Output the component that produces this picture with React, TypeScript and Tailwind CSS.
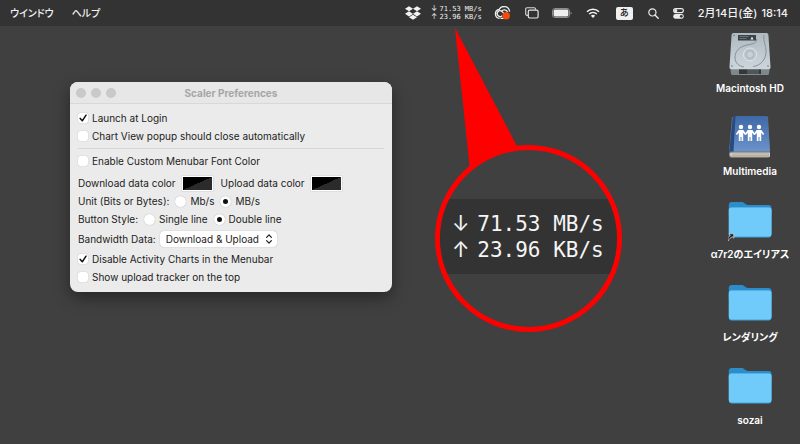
import { useState } from 'react';
import type { ReactNode } from 'react';
import { FaDropbox } from 'react-icons/fa';

interface CheckRowProps {
    id: string;
    label: string;
    defaultChecked?: boolean;
}

const CheckRow = ({ id, label, defaultChecked = false }: CheckRowProps) => (
    <div className="flex items-center gap-1 h-[18px]">
        <span className="relative flex">
            <input
                id={id}
                type="checkbox"
                defaultChecked={defaultChecked}
                className="peer appearance-none w-[10px] h-[10px] rounded-xs bg-white shadow-[0_0_1px_rgba(0,0,0,0.35)]"
            />
            <svg viewBox="0 0 10 10" className="absolute inset-0 w-[10px] h-[10px] hidden peer-checked:block pointer-events-none">
                <path d="M2.2 5.4 4.3 7.8 8 2.2" fill="none" stroke="#111" strokeWidth="1.5" strokeLinecap="round" strokeLinejoin="round" />
            </svg>
        </span>
        <label htmlFor={id}>{label}</label>
    </div>
);

interface RadioRowProps {
    name: string;
    label: string;
    options: string[];
    initial: string;
}

const RadioRow = ({ name, label, options, initial }: RadioRowProps) => {
    const [value, setValue] = useState(initial);

    return (
        <div role="radiogroup" aria-label={label} className="flex items-center gap-[6px] h-[18px]">
            <span>{label}</span>
            {options.map((option) => (
                <label key={option} className="flex items-center gap-1">
                    <input
                        type="radio"
                        name={name}
                        checked={value === option}
                        onChange={() => setValue(option)}
                        className="appearance-none w-[11px] h-[11px] rounded-full bg-white checked:bg-[#111] checked:border-3 border-white shadow-[0_0_1px_rgba(0,0,0,0.35)]"
                    />
                    {option}
                </label>
            ))}
        </div>
    );
};

const ColorWell = ({ id, label }: { id: string; label: string }) => (
    <div className="flex items-center gap-[6px]">
        <label htmlFor={id}>{label}</label>
        <input
            id={id}
            type="color"
            defaultValue="#000000"
            className="appearance-none w-[31px] h-[15px] p-0 border border-white bg-[linear-gradient(to_bottom_right,#000_50%,#2b2b2b_50%)] shadow-[0_0_1px_rgba(0,0,0,0.3)] [&::-webkit-color-swatch]:opacity-0"
        />
    </div>
);

const PreferencesWindow = () => (
    <section className="absolute left-[70px] top-14 w-[322px] rounded-lg bg-[#ebebeb] text-[#222] text-[10px] leading-4 overflow-hidden shadow-[0_6px_16px_rgba(0,0,0,0.4)]">
        <header className="relative flex items-center justify-center h-[22px] border-b border-[#d8d8d8] bg-[#e7e7e7]">
            <div className="absolute left-[6px] flex gap-[5px]">
                <button aria-label="Close" className="w-[10px] h-[10px] rounded-full bg-[#c9c9c9]" />
                <button aria-label="Minimize" className="w-[10px] h-[10px] rounded-full bg-[#c9c9c9]" />
                <button aria-label="Zoom" className="w-[10px] h-[10px] rounded-full bg-[#c9c9c9]" />
            </div>
            <h1 className="font-bold text-[#a6a6a6]">Scaler Preferences</h1>
        </header>
        <form className="px-2 pt-[5px] pb-[6px]">
            <CheckRow id="launch" label="Launch at Login" defaultChecked />
            <CheckRow id="autoclose" label="Chart View popup should close automatically" />
            <hr className="my-[3px] border-[#d6d6d6]" />
            <CheckRow id="custom-color" label="Enable Custom Menubar Font Color" />
            <div className="flex items-center gap-2 h-[18px] mt-1">
                <ColorWell id="download-color" label="Download data color" />
                <ColorWell id="upload-color" label="Upload data color" />
            </div>
            <RadioRow name="unit" label="Unit (Bits or Bytes):" options={['Mb/s', 'MB/s']} initial="MB/s" />
            <RadioRow name="style" label="Button Style:" options={['Single line', 'Double line']} initial="Double line" />
            <div className="flex items-center gap-1 h-[22px]">
                <label htmlFor="bandwidth">Bandwidth Data:</label>
                <span className="relative flex">
                    <select id="bandwidth" className="appearance-none w-[117px] h-4 pl-[6px] rounded-sm bg-white shadow-[0_0_1px_rgba(0,0,0,0.4)]">
                        <option>Download &amp; Upload</option>
                        <option>Download</option>
                        <option>Upload</option>
                    </select>
                    <svg viewBox="0 0 8 12" className="absolute right-1 top-[2px] w-2 h-3 pointer-events-none">
                        <path d="M1.6 4.4 4 1.8l2.4 2.6M1.6 7.6 4 10.2l2.4-2.6" fill="none" stroke="#222" strokeWidth="1.2" strokeLinecap="round" strokeLinejoin="round" />
                    </svg>
                </span>
            </div>
            <CheckRow id="charts" label="Disable Activity Charts in the Menubar" defaultChecked />
            <CheckRow id="tracker" label="Show upload tracker on the top" />
        </form>
    </section>
);

const CloudIcon = () => (
    <svg viewBox="0 0 18 14" className="w-[18px] h-[14px]">
        <g fill="none" stroke="#f0f0f0" strokeWidth="1.3">
            <path d="M5.6 12.4a4.6 4.6 0 0 1-.4-9.1A5.6 5.6 0 0 1 15.6 5.6" />
            <path d="M8.2 9.6A2.9 2.9 0 1 1 7.9 5.4L11 8.6" />
            <path d="M6.6 12.4h3.2M7.6 5.2A3.4 3.4 0 0 1 13.5 6" />
        </g>
        <circle cx="12.2" cy="9.8" r="3.8" fill="#f04a0c" />
    </svg>
);

const WindowsIcon = () => (
    <svg viewBox="0 0 14 12" className="w-[14px] h-3">
        <path d="M3 8.4H2A1.3 1.3 0 0 1 .7 7V2A1.3 1.3 0 0 1 2 .7h7.2A1.3 1.3 0 0 1 10.5 2v.8" fill="none" stroke="#d8d8d8" strokeWidth="1.1" />
        <rect x="3.3" y="3.2" width="9.8" height="7.8" rx="1.4" fill="none" stroke="#e6e6e6" strokeWidth="1.2" />
    </svg>
);

const BatteryIcon = () => (
    <svg viewBox="0 0 20 10" className="w-5 h-[10px]">
        <rect x="0.5" y="0.5" width="17" height="9" rx="2.4" fill="none" stroke="#8c8c8c" />
        <rect x="1.6" y="1.6" width="14.8" height="6.8" rx="1.4" fill="#f0f0f0" />
        <path d="M18.6 3.4v3.2c.7-.3 1.1-.9 1.1-1.6s-.4-1.3-1.1-1.6z" fill="#8c8c8c" />
    </svg>
);

const WifiIcon = () => (
    <svg viewBox="0 0 14 10" className="w-[14px] h-[10px]">
        <path d="M1 3.7a8.6 8.6 0 0 1 12 0M3.2 6a5.5 5.5 0 0 1 7.6 0" fill="none" stroke="#f2f2f2" strokeWidth="1.6" />
        <path d="M7 9.9 4.9 7.8a3 3 0 0 1 4.2 0z" fill="#f2f2f2" />
    </svg>
);

const SearchIcon = () => (
    <svg viewBox="0 0 11 11" className="w-[11px] h-[11px]">
        <circle cx="4.4" cy="4.4" r="3.6" fill="none" stroke="#ececec" strokeWidth="1.2" />
        <path d="m7 7 3.2 3.2" stroke="#ececec" strokeWidth="1.4" strokeLinecap="round" />
    </svg>
);

const ControlCenterIcon = () => (
    <svg viewBox="0 0 11 11" className="w-[11px] h-[11px]">
        <rect x="0.6" y="0.6" width="9.8" height="4" rx="2" fill="none" stroke="#ececec" strokeWidth="1.1" />
        <circle cx="2.7" cy="2.6" r="1.6" fill="#ececec" />
        <rect x="0.2" y="5.9" width="10.6" height="4.9" rx="2.4" fill="#ececec" />
        <circle cx="8.3" cy="8.35" r="1.4" fill="#333" />
    </svg>
);

const SpeedLine = ({ arrow, value }: { arrow: string; value: string }) => (
    <div className="flex">
        <span className="w-[2ch]"><span className="font-[Inter,sans-serif]">{arrow}</span></span>
        <span>{value}</span>
    </div>
);

const Speed = () => (
    <>
        <SpeedLine arrow="↓" value="71.53 MB/s" />
        <SpeedLine arrow="↑" value="23.96 KB/s" />
    </>
);

const MenuBar = () => (
    <nav className="flex items-center justify-between h-[26px] pl-[10px] pr-3 bg-[#333] text-[#f2f2f2] text-[10px] font-medium whitespace-nowrap">
        <div className="flex gap-[18px]">
            <button>ウインドウ</button>
            <button>ヘルプ</button>
        </div>
        <div className="flex items-center">
            <button aria-label="Dropbox" className="mr-[10px]"><FaDropbox className="w-4 h-4" /></button>
            <button className="mr-3 font-['DejaVu_Sans_Mono','Liberation_Mono',monospace] text-[7px] leading-2 text-left font-normal whitespace-pre"><Speed /></button>
            <button aria-label="Creative Cloud" className="mr-[13px]"><CloudIcon /></button>
            <button aria-label="Windows" className="mr-[13px]"><WindowsIcon /></button>
            <button aria-label="Battery" className="mr-[14px]"><BatteryIcon /></button>
            <button aria-label="Wi-Fi" className="mr-4"><WifiIcon /></button>
            <button aria-label="Input source" className="flex items-center justify-center w-[17px] h-[13px] mr-[15px] rounded-xs bg-[#f0f0f0] text-[#222] text-[9px] leading-3">あ</button>
            <button aria-label="Search" className="mr-[14px]"><SearchIcon /></button>
            <button aria-label="Control Center" className="mr-[14px]"><ControlCenterIcon /></button>
            <button className="flex gap-1 text-[11px]">
                <span>2月14日(金)</span>
                <span>18:14</span>
            </button>
        </div>
    </nav>
);

// red pointer from the menubar item down to the magnified readout
const Callout = () => (
    <div className="absolute right-[178px] top-[2px] w-[187px] h-[304px]">
        <svg viewBox="0 0 187 304" className="absolute inset-0 w-full h-full">
            <path d="M20 0 35 142 60 150 84 122z" fill="#f00" />
        </svg>
        <div className="absolute bottom-0 flex flex-col justify-center w-[187px] h-[187px] rounded-full border-5 border-[#f00] bg-[#404040] overflow-hidden">
            <div className="flex flex-col justify-center h-[75px] mb-1 pl-3 bg-[#333] text-[#f5f5f5] font-['DejaVu_Sans_Mono','Liberation_Mono',monospace] text-[21px] leading-[26px] whitespace-pre">
                <Speed />
            </div>
        </div>
    </div>
);

const DriveIcon = () => (
    <svg viewBox="0 0 44 44" className="w-11 h-11">
        <defs>
            <linearGradient id="drive" x1="0" y1="0" x2="0" y2="1">
                <stop offset="0" stopColor="#aeb9c0" />
                <stop offset="1" stopColor="#cdd6db" />
            </linearGradient>
        </defs>
        <path d="M2 34h40l-1 7.5a1.5 1.5 0 0 1-1.5 1.5h-35A1.5 1.5 0 0 1 3 41.500z" fill="#7f888d" />
        <path d="M11 37h22v5H11z" fill="#33383b" />
        <path d="M20 37v5M22 37v5M24 37v5M26 37v5M28 37v5M30 37v5" stroke="#858d91" strokeWidth="0.7" />
        <path d="M5.600 1h32.800a2 2 0 0 1 2 1.800L42.500 35a2 2 0 0 1-2 2.200h-37a2 2 0 0 1-2-2.200L3.600 2.800A2 2 0 0 1 5.600 1z" fill="url(#drive)" />
        <path d="M29 7c-1 5-5 5-10 6C11 14.500 6.500 20 7 26c.4 5 4 8.500 9 8.800M36 3c-1 4 1 8 2 15 .6 9-5 15.500-13 16.500" fill="none" stroke="#7f8b93" strokeWidth="0.9" />
        <circle cx="22" cy="22.500" r="6.500" fill="#bac4ca" stroke="#e4eaed" strokeWidth="0.9" />
        <circle cx="22" cy="22.500" r="3.500" fill="#c8d1d6" stroke="#9ba6ad" strokeWidth="0.6" />
        <rect x="10" y="3" width="18" height="5.500" fill="#3c4348" />
        <path d="M11.500 4.500h9M11.500 6.500h7" stroke="#7d868c" strokeWidth="0.7" />
        <path d="m22.500 7.500 1.500-3 1.500 3z" fill="#eee" />
        <circle cx="6" cy="3.500" r="0.800" fill="#68737a" />
        <circle cx="4" cy="34" r="0.800" fill="#68737a" />
        <circle cx="40" cy="34" r="0.800" fill="#68737a" />
    </svg>
);

const Person = ({ x }: { x: number }) => (
    <g transform={`translate(${x} 0)`} fill="#fff">
        <circle cx="0" cy="12" r="2.200" />
        <path d="M-2.400 15h4.800L5.200 19l-1.200 1L2.200 17.800V26H.5v-4h-1v4h-1.700v-8.200L-4 20l-1.200-1z" />
    </g>
);

const BookIcon = () => (
    <svg viewBox="0 0 44 44" className="w-11 h-11">
        <defs>
            <linearGradient id="cover" x1="0" y1="0" x2="0" y2="1">
                <stop offset="0" stopColor="#3f68a8" />
                <stop offset="1" stopColor="#6d94cb" />
            </linearGradient>
        </defs>
        <path d="M4 2h36l2 35v4a2 2 0 0 1-2 2H4a3 3 0 0 1-3-3v-3z" fill="#787268" />
        <path d="M3.500 37.500H42v4.200H4a2.100 2.100 0 0 1-.5-4.200z" fill="#cfcbc1" />
        <path d="M4 39h37M4 40.500h37" stroke="#99958b" strokeWidth="0.500" />
        <path d="M5 1h34.500L42 36.500H3A2 2 0 0 0 1 38z" fill="url(#cover)" />
        <path d="M5 1h2.500L5.500 36.500H3A2 2 0 0 0 1 38z" fill="#274a82" />
        <Person x={13} />
        <Person x={22} />
        <Person x={31} />
    </svg>
);

const FolderIcon = ({ alias = false }: { alias?: boolean }) => (
    <svg viewBox="0 0 44 44" className="w-11 h-11">
        <path d="M.8 7A3 3 0 0 1 3.800 4h9.400c1.500 0 2.300.5 3.300 1.300l1.300 1c.8.600 1.500.7 2.500.7H40.500a3 3 0 0 1 3 3v8H.8z" fill="#2c8dca" />
        <path d="M.8 12A2.500 2.500 0 0 1 3.300 9.500h37.700a2.500 2.500 0 0 1 2.500 2.500v24.500a3 3 0 0 1-3 3H3.800a3 3 0 0 1-3-3z" fill="#3ea4da" />
        <path d="M.8 12A2.500 2.500 0 0 1 3.300 9.500h37.700a2.500 2.500 0 0 1 2.500 2.500v23.500a3 3 0 0 1-3 3H3.800a3 3 0 0 1-3-3z" fill="#70cbfa" />
        {alias && (
            <path d="M0 43c-.5-3 .3-4.500 2.300-5.600L.8 35.800 5.600 35.600l.2 4.600-1.500-1.400C2.500 39.600 1.500 40.500 0 43z" fill="#222" stroke="#ddd" strokeWidth="0.700" />
        )}
    </svg>
);

const DesktopItem = ({ icon, name }: { icon: ReactNode; name: string }) => (
    <button className="flex flex-col items-center gap-1">
        {icon}
        <span className="leading-4">{name}</span>
    </button>
);

const App = () => (
    <div className="flex flex-col min-h-screen bg-[#404040] font-[Inter,'Noto_Sans_CJK_JP',sans-serif] [font-feature-settings:'palt']">
        <MenuBar />
        <main className="relative flex flex-1 justify-end">
            <PreferencesWindow />
            <Callout />
            <div className="flex flex-col items-center gap-[19px] w-[100px] pt-[6px] pb-4 text-white text-[10px] font-semibold whitespace-nowrap [text-shadow:0_1px_2px_rgba(0,0,0,0.7)]">
                <DesktopItem icon={<DriveIcon />} name="Macintosh HD" />
                <DesktopItem icon={<BookIcon />} name="Multimedia" />
                <DesktopItem icon={<FolderIcon alias />} name="α7r2のエイリアス" />
                <DesktopItem icon={<FolderIcon />} name="レンダリング" />
                <DesktopItem icon={<FolderIcon />} name="sozai" />
            </div>
        </main>
    </div>
);

export default App;
